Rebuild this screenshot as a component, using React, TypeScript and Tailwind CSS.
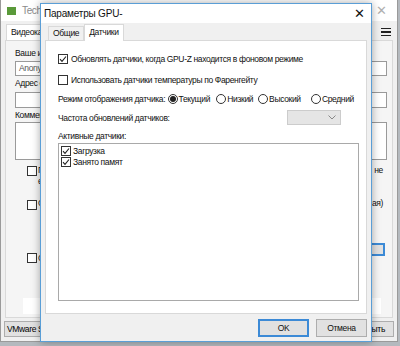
import React from 'react';

const font = { fontFamily: '"Liberation Sans", "Noto Sans", sans-serif' };

function Check({ checked }: { checked?: boolean }) {
  return (
    <span className="flex h-[10px] w-[10px] shrink-0 items-center justify-center border border-[#333] bg-white">
      {checked && (
        <svg width="8" height="8" viewBox="0 0 8 8">
          <path d="M1 4.2 L3 6.3 L7 1.5" fill="none" stroke="#222" strokeWidth="1.1" />
        </svg>
      )}
    </span>
  );
}

function Radio({ checked, label }: { checked?: boolean; label: string }) {
  return (
    <span className="flex items-center gap-[1px]">
      <span className="flex h-[10px] w-[10px] shrink-0 items-center justify-center rounded-full border border-[#333] bg-white">
        {checked && <span className="h-[6px] w-[6px] rounded-full bg-[#222]" />}
      </span>
      <span>{label}</span>
    </span>
  );
}

function BackWindow() {
  return (
    <div className="flex h-[342px] w-[398px] flex-col border-x border-b border-[#9a9a9a] bg-[#f0f0f0]">
      <div className="flex h-[21px] items-center bg-white pl-[6px] pr-[10px] text-[10px] text-[#8a8a8a]">
        <span className="mr-[6px] h-[8px] w-[9px] bg-[#5a9a3a]" />
        <span>TechPowerUp GPU-Z</span>
        <span className="ml-auto text-[13px] text-[#b0b0b0]">✕</span>
      </div>
      <div className="flex h-[19px] items-end justify-between pl-[5px] pr-[6px]">
        <span className="h-[16px] border border-b-0 border-[#d9d9d9] bg-white px-[4px] leading-[15px] text-[#111]">Видеокарта</span>
        <span className="mb-[4px] flex flex-col gap-[2px]">
          <span className="h-[1.5px] w-[10px] bg-[#222]" />
          <span className="h-[1.5px] w-[10px] bg-[#222]" />
          <span className="h-[1.5px] w-[10px] bg-[#222]" />
        </span>
      </div>
      <div className="mx-[4px] flex h-[278px] flex-col border border-[#d9d9d9] bg-[#f5f5f5] px-[9px] pt-[6px] text-[#111]">
        <span className="leading-[12px]">Ваше имя</span>
        <span className="mt-[2px] h-[15px] w-[372px] border border-[#9a9a9a] bg-white px-[3px] leading-[13px] text-[#555]">Anonymous</span>
        <span className="mt-[1px] leading-[12px]">Адрес e-mail:</span>
        <span className="mt-[3px] h-[16px] w-[372px] border border-[#9a9a9a] bg-white" />
        <span className="mt-[1px] leading-[12px]">Комментарий</span>
        <span className="mt-[1px] h-[38px] w-[372px] border border-[#9a9a9a] bg-white" />
        <div className="mt-[5px] flex items-start gap-[1px] pl-[12px] leading-[11px]">
          <span className="mt-[1px]"><Check /></span>
          <div className="flex w-[345px] flex-col">
            <div className="flex justify-between">
              <span>Показывать предупреждение, если</span>
              <span>не</span>
            </div>
            <span>есть в базе</span>
          </div>
        </div>
        <div className="mt-[11px] flex items-start gap-[1px] pl-[12px] leading-[11px]">
          <span className="mt-[2px]"><Check /></span>
          <div className="flex w-[345px] flex-col">
            <div className="flex justify-between">
              <span>Сообщать о проблемах</span>
              <span>ая)</span>
            </div>
            <span className="mt-[6px] pl-[2px]">-</span>
          </div>
        </div>
        <div className="mt-[17px] flex items-start justify-between pl-[12px]">
          <div className="flex items-center gap-[1px] pt-[10px]">
            <Check />
            <span>Сохранить</span>
          </div>
          <span className="mr-[-2px] h-[13px] w-[60px] border-2 border-[#3c8ad6] bg-[#e1e1e1]" />
        </div>
        <div className="mt-[35px] flex pl-[8px]">
          <span className="h-[16px] w-[358px] bg-white" />
        </div>
      </div>
      <div className="flex justify-between px-[3px] pt-[3px]">
        <span className="h-[16px] w-[120px] border border-[#adadad] bg-[#e1e1e1] px-[2px] leading-[14px]">VMware SVGA 3D</span>
        <span className="h-[16px] w-[70px] border border-[#adadad] bg-[#e1e1e1] pr-[8px] text-right leading-[14px]">Закрыть</span>
      </div>
    </div>
  );
}

function Dialog() {
  return (
    <div className="absolute left-[40px] top-[3px] flex h-[339px] w-[332px] flex-col border border-[#5a9ed6] bg-[#f0f0f0] text-[#111] shadow-[0_0_8px_rgba(0,0,0,0.35)]">
      <div className="flex h-[19px] items-center bg-white pl-[3px] pr-[6px] text-[10px] tracking-[-0.2px]">
        <span>Параметры GPU-</span>
        <span className="ml-auto text-[13px] leading-none">✕</span>
      </div>
      <div className="mt-[2px] flex h-[15px] items-end pl-[7px]">
        <span className="h-[14px] border border-b-0 border-[#d9d9d9] bg-[#f0f0f0] px-[4px] leading-[13px]">Общие</span>
        <span className="relative top-[1px] h-[17px] border border-b-0 border-[#d9d9d9] bg-white px-[4px] leading-[15px]">Датчики</span>
      </div>
      <div className="mx-[4px] flex h-[274px] flex-col border border-[#d9d9d9] bg-white px-[12px] pt-[13px]">
        <div className="flex items-center gap-[3px]">
          <Check checked />
          <span>Обновлять датчики, когда GPU-Z находится в фоновом режиме</span>
        </div>
        <div className="mt-[11px] flex items-center gap-[3px]">
          <Check />
          <span>Использовать датчики температуры по Фаренгейту</span>
        </div>
        <div className="mt-[9px] flex items-center">
          <span className="w-[110px] whitespace-nowrap">Режим отображения датчика:</span>
          <span className="w-[49px]"><Radio checked label="Текущий" /></span>
          <span className="w-[42px]"><Radio label="Низкий" /></span>
          <span className="w-[53px]"><Radio label="Высокий" /></span>
          <Radio label="Средний" />
        </div>
        <div className="mt-[6px] flex items-center">
          <span className="w-[229px]">Частота обновлений датчиков:</span>
          <span className="flex h-[15px] w-[54px] items-center justify-end border border-[#cccccc] bg-[#e5e5e5] pr-[4px]">
            <svg width="8" height="5" viewBox="0 0 8 5">
              <path d="M0.5 0.5 L4 4 L7.5 0.5" fill="none" stroke="#888" strokeWidth="1" />
            </svg>
          </span>
        </div>
        <span className="mt-[6px]">Активные датчики:</span>
        <div className="mt-[2px] flex h-[158px] w-[301px] flex-col gap-[1px] border border-[#a9a9a9] px-[2px] pt-[2px]">
          <div className="flex items-center gap-[2px]">
            <Check checked />
            <span>Загрузка</span>
          </div>
          <div className="flex items-center gap-[2px]">
            <Check checked />
            <span>Занято памят</span>
          </div>
        </div>
      </div>
      <div className="mt-[5px] flex justify-end gap-[7px] pr-[4px]">
        <span className="flex h-[18px] w-[51px] items-center justify-center border-2 border-[#3c8ad6] bg-[#e1e1e1]">OK</span>
        <span className="flex h-[18px] w-[51px] items-center justify-center border border-[#adadad] bg-[#e1e1e1]">Отмена</span>
      </div>
    </div>
  );
}

export default function App() {
  return (
    <div className="relative h-[346px] w-[400px] overflow-hidden bg-[#b4b9be] text-[8.5px] leading-[10px] tracking-[-0.35px]" style={font}>
      <BackWindow />
      <Dialog />
    </div>
  );
}
